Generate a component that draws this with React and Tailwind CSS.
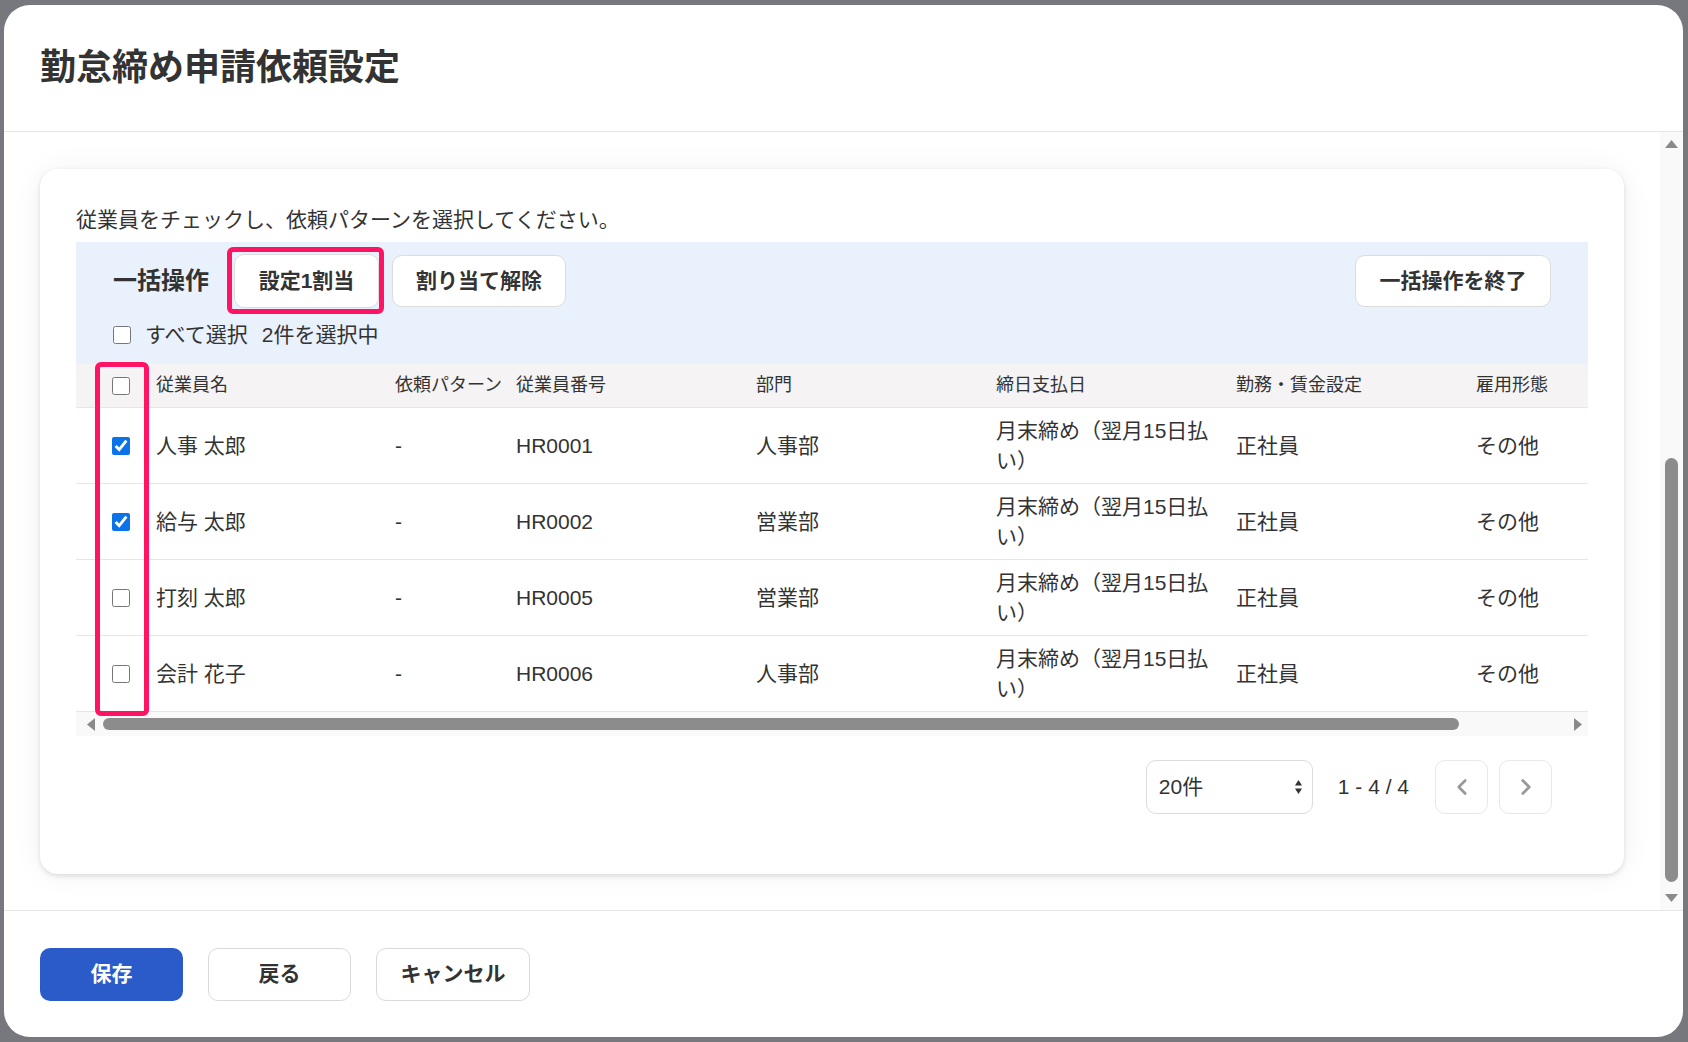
import { ChevronLeft, ChevronRight } from 'lucide-react'

const FONT = { fontFamily: '"Liberation Sans", "Noto Sans CJK JP", sans-serif' }

const employees = [
  { name: '人事 太郎', code: 'HR0001', dept: '人事部', checked: true },
  { name: '給与 太郎', code: 'HR0002', dept: '営業部', checked: true },
  { name: '打刻 太郎', code: 'HR0005', dept: '営業部', checked: false },
  { name: '会計 花子', code: 'HR0006', dept: '人事部', checked: false },
]

const columns = [
  { label: '従業員名', w: 'w-[239px]' },
  { label: '依頼パターン', w: 'w-[121px]' },
  { label: '従業員番号', w: 'w-[240px]' },
  { label: '部門', w: 'w-[240px]' },
  { label: '締日支払日', w: 'w-[240px]' },
  { label: '勤務・賃金設定', w: 'w-[240px]' },
  { label: '雇用形態', w: 'w-[240px]' },
  { label: '', w: 'w-[240px]' },
]

function Check({ checked }) {
  return (
    <input
      type="checkbox"
      defaultChecked={checked}
      className="w-[18px] h-[18px] m-0 accent-[#0b72e7]"
    />
  )
}

function Tri({ dir }) {
  const pts = {
    up: '0,8 6.5,0 13,8',
    down: '0,0 13,0 6.5,8',
    left: '8,0 8,13 0,6.5',
    right: '0,0 0,13 8,6.5',
  }[dir]
  const w = dir === 'up' || dir === 'down' ? 13 : 8
  const h = dir === 'up' || dir === 'down' ? 8 : 13
  return (
    <svg width={w} height={h} viewBox={`0 0 ${w} ${h}`}>
      <polygon points={pts} fill="#8a8a8a" />
    </svg>
  )
}

function BulkPanel() {
  return (
    <div className="bg-[#e9f1fc] pt-3 pb-[14px] px-[37px]">
      <div className="flex items-center h-[54px]">
        <span className="text-[24px] font-bold text-[#333] mr-[25px]">一括操作</span>
        <button className="relative h-[54px] w-[145px] bg-white border border-[#dcdcdc] rounded-[10px] text-[21px] font-bold text-[#333]">
          設定1割当
          <span className="absolute -left-[8px] -right-[6px] -top-[8px] -bottom-[7px] border-[5px] border-[#ff1463] rounded-[6px]" />
        </button>
        <button className="ml-[13px] h-[52px] w-[174px] bg-white border border-[#dcdcdc] rounded-[10px] text-[21px] font-bold text-[#333]">
          割り当て解除
        </button>
        <button className="ml-auto h-[52px] w-[196px] bg-white border border-[#dcdcdc] rounded-[10px] text-[21px] font-bold text-[#333]">
          一括操作を終了
        </button>
      </div>
      <div className="flex items-center h-[30px] mt-3 text-[21px] text-[#333]">
        <Check checked={false} />
        <span className="ml-[14px]">すべて選択</span>
        <span className="ml-[14px]">2件を選択中</span>
      </div>
    </div>
  )
}

function EmployeeTable() {
  return (
    <div className="relative">
      <div className="overflow-hidden">
        <div className="flex w-[1640px] h-[44px] bg-[#f5f3f4] border-b border-[#e6e6e6] items-center text-[18px] text-[#333]">
          <div className="w-[80px] shrink-0 pl-[36px] flex items-center">
            <Check checked={false} />
          </div>
          {columns.map((c, i) => (
            <div key={i} className={`${c.w} shrink-0 whitespace-nowrap`}>{c.label}</div>
          ))}
        </div>
        {employees.map((e) => {
          const cells = [e.name, '-', e.code, e.dept, '月末締め（翌月15日払い）', '正社員', 'その他', '']
          return (
            <div
              key={e.code}
              className="flex w-[1640px] h-[76px] border-b border-[#e6e6e6] items-center text-[21px] leading-[30px] text-[#333]"
            >
              <div className="w-[80px] shrink-0 pl-[36px] flex items-center">
                <Check checked={e.checked} />
              </div>
              {cells.map((v, i) => (
                <div key={i} className={`${columns[i].w} shrink-0 pr-4`}>{v}</div>
              ))}
            </div>
          )
        })}
      </div>
      <div className="h-[24px] bg-[#f9f9f9] flex items-center">
        <div className="w-[27px] flex justify-end pr-[8px]">
          <Tri dir="left" />
        </div>
        <div className="w-[1356px] h-[12px] rounded-full bg-[#8c8c8c]" />
        <div className="flex-1 flex justify-end pr-[6px]">
          <Tri dir="right" />
        </div>
      </div>
      <span className="absolute left-[19px] -top-[2px] w-[54px] h-[354px] border-[5px] border-[#ff1463] rounded-[6px]" />
    </div>
  )
}

function Pagination() {
  return (
    <div className="flex items-center justify-end mt-[24px] pr-9 text-[21px] text-[#333]">
      <div className="w-[167px] h-[54px] border border-[#dcdcdc] rounded-[10px] flex items-center justify-between pl-3 pr-[10px]">
        <span>20件</span>
        <svg width="7" height="14" viewBox="0 0 7 14">
          <polygon points="0,5.5 3.5,0 7,5.5" fill="#333" />
          <polygon points="0,8.5 7,8.5 3.5,14" fill="#333" />
        </svg>
      </div>
      <span className="ml-[25px]">1 - 4 / 4</span>
      <button className="ml-[26px] w-[53px] h-[54px] border border-[#e8e8e8] rounded-[10px] flex items-center justify-center">
        <ChevronLeft size={26} color="#999" strokeWidth={2.5} />
      </button>
      <button className="ml-[11px] w-[53px] h-[54px] border border-[#e8e8e8] rounded-[10px] flex items-center justify-center">
        <ChevronRight size={26} color="#999" strokeWidth={2.5} />
      </button>
    </div>
  )
}

export default function App() {
  return (
    <div style={FONT} className="w-[1688px] h-[1042px] bg-[#77787d] pt-[5px] pl-[4px] pr-[5px] pb-[5px]">
      <div className="h-full bg-white rounded-[26px] overflow-hidden flex flex-col">
        <div className="h-[127px] shrink-0 border-b border-[#e6e6e6] px-9 flex items-center">
          <h1 className="text-[36px] font-bold text-[#333]">勤怠締め申請依頼設定</h1>
        </div>

        <div className="flex-1 flex min-h-0">
          <div className="flex-1 px-9 py-[37px] overflow-hidden">
            <div className="bg-white rounded-[18px] shadow-[0_2px_5px_rgba(0,0,0,0.12),0_0_30px_rgba(0,0,0,0.06)] px-9 pt-9 pb-[60px]">
              <p className="text-[21px] leading-[30px] text-[#333] mb-[7px]">
                従業員をチェックし、依頼パターンを選択してください。
              </p>
              <BulkPanel />
              <EmployeeTable />
              <Pagination />
            </div>
          </div>
          <div className="w-[23px] bg-[#f9f9f9] flex flex-col items-center">
            <div className="h-[24px] flex items-center">
              <Tri dir="up" />
            </div>
            <div className="flex-1 flex flex-col justify-end pb-[4px]">
              <div className="w-[13px] h-[424px] rounded-full bg-[#8c8c8c]" />
            </div>
            <div className="h-[24px] flex items-center">
              <Tri dir="down" />
            </div>
          </div>
        </div>

        <div className="h-[127px] shrink-0 border-t border-[#e6e6e6] px-9 flex items-center gap-[25px] text-[21px] font-bold">
          <button className="w-[143px] h-[53px] rounded-[10px] bg-[#2a5bc8] text-white">保存</button>
          <button className="w-[143px] h-[53px] rounded-[10px] border border-[#dadada] text-[#333]">戻る</button>
          <button className="w-[154px] h-[53px] rounded-[10px] border border-[#dadada] text-[#333]">キャンセル</button>
        </div>
      </div>
    </div>
  )
}
